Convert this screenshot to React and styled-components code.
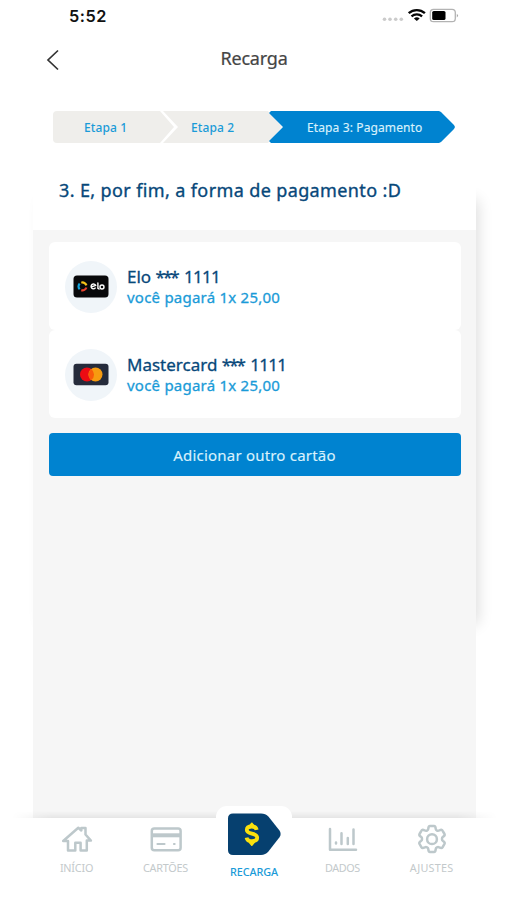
import React from "react";
import styled, { createGlobalStyle, css } from "styled-components";

const c = {
  blue: "#0083d0",
  sky: "#1a9bd8",
  navy: "#07487a",
  grey: "#f6f6f6",
  step: "#efeeeb",
  icon: "#bdc8cb",
};

const Global = createGlobalStyle`
  * { box-sizing: border-box; }
  body { margin: 0; background: #fff; }
  button { font: inherit; border: 0; padding: 0; background: none; }
`;

const Screen = styled.div`
  width: 507px;
  height: 900px;
  overflow: hidden;
  display: flex;
  flex-direction: column;
  background: #fff;
  font-family: "Noto Sans", sans-serif;
`;

const Text = styled.span`
  display: block;
  white-space: nowrap;
  font-size: ${(p) => p.$size}px;
  line-height: ${(p) => p.$line}px;
  letter-spacing: ${(p) => p.$track || 0}px;
  color: ${(p) => p.$color};
  font-weight: ${(p) => p.$weight || 400};
  -webkit-text-stroke: ${(p) => p.$stroke || 0}px currentColor;
`;

const Stars = styled.span`
  letter-spacing: -2px;
  margin-right: 2px;
`;

const Digits = styled.span`
  letter-spacing: -0.75px;
`;

const StatusBar = styled.div`
  height: 32px;
  padding: 0 48px 0 69px;
  display: flex;
  justify-content: space-between;
  align-items: center;
`;

const Clock = styled(Text)`
  font-family: Inter, sans-serif;
`;

const Header = styled.header`
  height: 79px;
  display: grid;
  grid-template-columns: 80px 1fr 80px;
  padding: 0 18px 0 19px;
`;

const BackButton = styled.button`
  width: 13px;
  height: 22px;
  margin: 17px 0 0 27px;
  svg { display: block; }
`;

const PageTitle = styled(Text)`
  margin-top: 12px;
  text-align: center;
`;

const Steps = styled.ol`
  list-style: none;
  margin: 0 52px 0 53px;
  padding: 0;
  height: 32px;
  display: flex;
  flex-shrink: 0;
`;

const Step = styled.li`
  width: ${(p) => p.$width}px;
  padding: 1px 0 0 ${(p) => p.$pad}px;
  display: flex;
  align-items: center;
  flex-shrink: 0;
  background: ${c.step};
  ${(p) => p.$kind === "first" && css`
    border-radius: 4px 0 0 4px;
    clip-path: polygon(0 0, 107px 0, 121px 50%, 107px 100%, 0 100%);
  `}
  ${(p) => p.$kind === "middle" && css`
    margin-left: -12px;
    clip-path: polygon(0 0, 105px 0, 119px 50%, 105px 100%, 0 100%, 15px 50%);
  `}
  ${(p) => p.$kind === "current" && css`
    margin-left: -13px;
    background: ${c.blue};
    clip-path: polygon(2px 0, 170px 0, 172px 1px, 185px 14px, 186px 16px, 185px 18px, 172px 31px, 170px 32px, 2px 32px, 0 30px, 14px 16px, 0 2px);
  `}
`;

const Panel = styled.main`
  position: relative;
  width: 443px;
  height: 675px;
  margin-left: 33px;
  flex-shrink: 0;
  &::before {
    content: "";
    position: absolute;
    z-index: 0;
    left: 8px;
    top: 57px;
    width: 435px;
    height: 424px;
    box-shadow: 2px 0 14px rgba(0, 0, 0, 0.14);
  }
`;

const Question = styled.div`
  position: relative;
  height: 87px;
  padding: 34px 0 0 26px;
  background: #fff;
`;

const Choices = styled.section`
  position: relative;
  height: 588px;
  padding: 12px 15.5px;
  background: ${c.grey};
`;

const Card = styled.article`
  height: 88px;
  border-radius: 6px;
  background: #fff;
  display: flex;
  align-items: center;
  padding: 1px 0 0 16px;
  gap: 10.5px;
`;

const BrandDisc = styled.div`
  width: 52px;
  height: 52px;
  border-radius: 50%;
  background: #f0f5f9;
  display: flex;
  align-items: center;
  justify-content: center;
`;

const AddButton = styled.button`
  width: 100%;
  height: 43px;
  margin-top: 15px;
  border-radius: 4px;
  background: ${c.blue};
  display: flex;
  align-items: center;
  justify-content: center;
`;

const Nav = styled.nav`
  position: relative;
  width: 485px;
  height: 82px;
  margin-left: 12px;
  flex-shrink: 0;
  display: grid;
  grid-template-columns: 129px 49px 127px 51px 127px;
  background: #fff;
  &::before {
    content: "";
    position: absolute;
    left: 0;
    right: 0;
    top: -7px;
    height: 7px;
    background: linear-gradient(transparent, rgba(0, 0, 0, 0.065));
    mask-image: linear-gradient(90deg, transparent, #000 40px, #000 445px, transparent);
  }
`;

const NavItem = styled.a`
  display: flex;
  flex-direction: column;
  align-items: center;
  padding-top: 6px;
  svg { display: block; height: 30px; }
`;

const ActiveItem = styled(NavItem)`
  position: relative;
  width: 76px;
  margin: -12px 0 0 26px;
  padding-top: 5px;
  border-radius: 11px 11px 0 0;
  background: #fff;
  svg { height: 48px; }
`;

const NavLabel = styled(Text)`
  margin-top: ${(p) => p.$gap ?? 7}px;
`;

const brands = {
  elo: (
    <svg width="36" height="23" viewBox="0 0 36 23">
      <rect x=".5" y=".5" width="35" height="22" rx="3.5" fill="#08090b" />
      <g fill="none" strokeWidth="2.2">
        <path d="M8.3 7.7a4 4 0 0 1 5.1 2.6" stroke="#f7c519" />
        <path d="M6.7 14.3a4 4 0 0 1 0-5.7" stroke="#12a3dc" />
        <path d="M13.4 12.5a4 4 0 0 1-5.1 2.6" stroke="#e9432f" />
      </g>
      <g fill="none" stroke="#fff" strokeWidth="1.4" strokeLinecap="round">
        <path d="M18.6 11.9l4-1.6a2.4 2.4 0 1 0-.4 2.8" />
        <path d="M24.9 7.9v5.4l1.1.7" />
        <circle cx="29" cy="12" r="2" />
      </g>
    </svg>
  ),
  mastercard: (
    <svg width="36" height="23" viewBox="0 0 36 23">
      <rect x=".5" y=".8" width="35" height="21.5" rx="3" fill="#252b3b" />
      <circle cx="14" cy="11.5" r="7" fill="#ec0b13" />
      <circle cx="22.5" cy="11.5" r="7" fill="#f79b10" />
      <path d="M18.25 5.9a7 7 0 0 1 0 11.2a7 7 0 0 1 0-11.2z" fill="#f95b0a" />
    </svg>
  ),
};

const methods = [
  { brand: "elo", name: "Elo" },
  { brand: "mastercard", name: "Mastercard" },
];

const line = { fill: "none", stroke: c.icon, strokeWidth: 2.5, strokeLinecap: "round", strokeLinejoin: "round" };

const HomeIcon = () => (
  <svg width="32" height="30" viewBox="0 0 32 30" {...line}>
    <path d="M2.200 17L17.300 3.800l3 2.700V4h4.200v6.500l5.400 6.100h-4.100v10h-6.200v-7.800h-5.300v7.800H7V17z" />
  </svg>
);
const CardIcon = () => (
  <svg width="32" height="30" viewBox="0 0 32 30" {...line}>
    <rect x="1.800" y="4.500" width="28.800" height="21.700" rx="2.500" />
    <path d="M2 11.300h28" strokeWidth="4" strokeLinecap="butt" />
    <path d="M7.500 20h7M24 20h.6" strokeWidth="2.200" />
  </svg>
);
const ChartIcon = () => (
  <svg width="32" height="30" viewBox="0 0 32 30" {...line}>
    <path d="M3 5v20.700h26M9 18.500v1M14.500 9.200V20M20.800 14v6M26.500 5.500V20" />
  </svg>
);
const GearIcon = () => (
  <svg width="32" height="30" viewBox="0 0 32 30" {...line}>
    <circle cx="16" cy="15.2" r="4.9" />
    <path d="M14 2h4c1 0 1.6.7 1.7 2.8.2 1.6 2 2.5 3.5 1.7 1.8-1 2.7-1 3.3.1l2 3.4c.5.9.2 1.7-1.5 2.8-1.4 1-1.4 3.2 0 4.2 1.7 1.1 2 2 1.5 2.9l-2 3.4c-.6 1-1.500 1-3.300.1-1.500-.8-3.300.1-3.500 1.700-.1 2.100-.7 2.900-1.700 2.900h-4c-1 0-1.600-.8-1.700-2.900-.2-1.600-2-2.500-3.500-1.700-1.800.9-2.700.9-3.300-.1l-2-3.400c-.5-.9-.2-1.800 1.500-2.900 1.400-1 1.400-3.200 0-4.200-1.700-1.100-2-1.900-1.500-2.800l2-3.400c.6-1.100 1.500-1.100 3.300-.1 1.500.8 3.300-.1 3.500-1.700C12.400 2.700 13 2 14 2z" />
  </svg>
);
const MoneyTagIcon = () => (
  <svg width="56" height="48" viewBox="0 0 56 48">
    <path d="M7 2.500h28c3 0 5.500 1 7.600 3.200L53.500 19.500c1.500 2.500 1.500 4.500 0 6.800L42.600 40.300c-2.100 2.500-4.600 3.700-7.600 3.700H7c-3.200 0-5-1.800-5-5V7.500c0-3.200 1.800-5 5-5z" fill="#06406f" />
    <path d="M30.700 18.800c-.5-2.400-2.200-3.300-4.900-3.300-3.100 0-5 1.200-5 3.400 0 4.900 10.400 2.400 10.400 7.700 0 2.400-2.200 3.600-5.200 3.600s-5-1.200-5.400-3.600" fill="none" stroke="#fbe10d" strokeWidth="3.800" />
    <path d="M25.800 12.200l2.500 3h-5zM25.800 34.300l-2.500-3h5z" fill="#fbe10d" stroke="#fbe10d" strokeWidth="1.500" strokeLinejoin="round" />
  </svg>
);

const StatusIcons = () => (
  <svg width="78" height="20" viewBox="0 0 78 20">
    <g fill="#cbcbcb">
      {[3.5, 9, 14.7, 20.3].map((x) => <circle key={x} cx={x} cy="13.2" r="1.8" />)}
    </g>
    <g fill="none" stroke="#050505" strokeWidth="2.4">
      <path d="M27.700 7.200a12.200 12.200 0 0 1 16.200 0" />
      <path d="M30.500 10.400a8 8 0 0 1 10.600 0" strokeWidth="2.200" />
    </g>
    <path d="M32.900 12.400q2.900-2.200 5.800 0l-2.900 2.700z" fill="#050505" />
    <rect x="49.300" y="3.300" width="25" height="12.400" rx="3.200" fill="none" stroke="#b3b3b3" strokeWidth="1.300" />
    <rect x="51.200" y="5" width="13.300" height="9" rx="1.600" fill="#000" />
    <path d="M75.800 7.700q2.400 1.800 0 3.800z" fill="#a5a5a5" />
  </svg>
);

const muted = { $size: 10.8, $line: 14, $track: -0.2, $color: "#c3c9cb" };

export default function App() {
  return (
    <Screen>
      <Global />
      <StatusBar>
        <Clock $size={16.3} $line={20} $weight={600} $color="#111" $track={0.5}>5:52</Clock>
        <StatusIcons />
      </StatusBar>
      <Header>
        <BackButton aria-label="Voltar">
          <svg width="13" height="22" viewBox="0 0 13 22" fill="none" stroke="#333" strokeWidth="1.700">
            <path d="M12 1.500L2 11l10 9.500" />
          </svg>
        </BackButton>
        <PageTitle $size={18} $line={28} $track={-0.2} $stroke={0.2} $color="#454545">Recarga</PageTitle>
      </Header>
      <Steps>
        <Step $kind="first" $width={122} $pad={31}>
          <Text $size={12} $line={20} $weight={500} $track={0.1} $color={c.sky}>Etapa 1</Text>
        </Step>
        <Step $kind="middle" $width={119} $pad={28}>
          <Text $size={12} $line={20} $weight={500} $track={0.1} $color={c.sky}>Etapa 2</Text>
        </Step>
        <Step $kind="current" $width={186} $pad={38}>
          <Text $size={12} $line={20} $track={0.12} $stroke={0.15} $color="#d9f1fc">Etapa 3: Pagamento</Text>
        </Step>
      </Steps>
      <Panel>
        <Question>
          <Text $size={18} $line={26} $track={0.38} $stroke={0.35} $color={c.navy}>3. E, por fim, a forma de pagamento :D</Text>
        </Question>
        <Choices>
          {methods.map((m) => (
            <Card key={m.brand}>
              <BrandDisc>{brands[m.brand]}</BrandDisc>
              <div>
                <Text $size={17} $line={20} $stroke={0.3} $color={c.navy}>
                  {m.name} <Stars>***</Stars> <Digits>1111</Digits>
                </Text>
                <Text $size={15} $line={20} $stroke={0.3} $color={c.sky} $track={0.23}>você pagará 1x 25,00</Text>
              </div>
            </Card>
          ))}
          <AddButton>
            <Text $size={15} $line={20} $track={0.2} $stroke={0.15} $color="#d9f1fc">Adicionar outro cartão</Text>
          </AddButton>
        </Choices>
      </Panel>
      <Nav>
        <NavItem><HomeIcon /><NavLabel {...muted}>INÍCIO</NavLabel></NavItem>
        <NavItem><CardIcon /><NavLabel {...muted}>CARTÕES</NavLabel></NavItem>
        <ActiveItem>
          <MoneyTagIcon />
          <NavLabel {...muted} $gap={6} $weight={500} $track={-0.1} $color={c.sky}>RECARGA</NavLabel>
        </ActiveItem>
        <NavItem><ChartIcon /><NavLabel {...muted} $track={-0.4}>DADOS</NavLabel></NavItem>
        <NavItem><GearIcon /><NavLabel {...muted} $track={0.2}>AJUSTES</NavLabel></NavItem>
      </Nav>
    </Screen>
  );
}
